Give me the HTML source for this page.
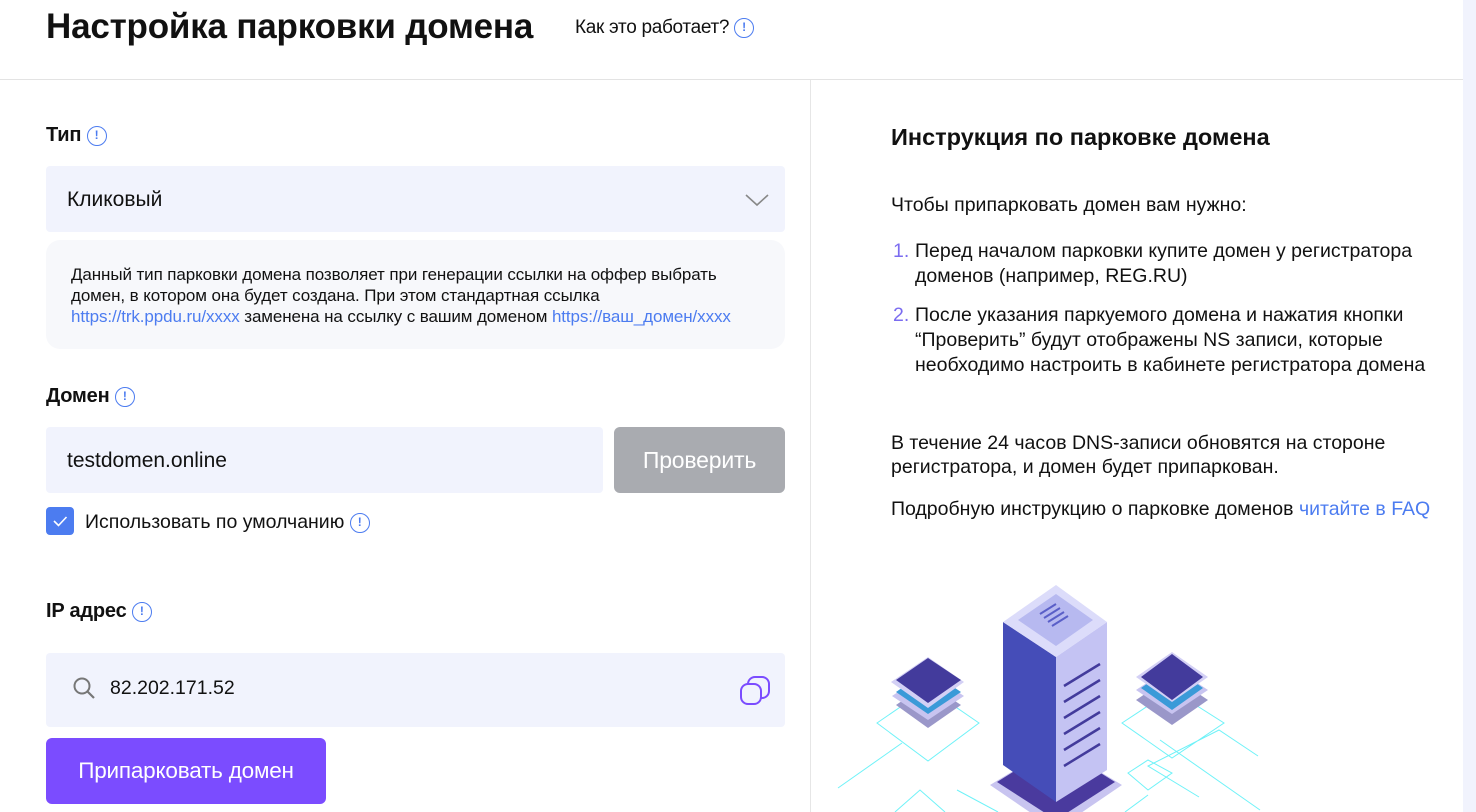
<!DOCTYPE html>
<html><head><meta charset="utf-8"><style>
*{margin:0;padding:0;box-sizing:border-box}
body{width:1476px;height:812px;overflow:hidden;background:#fff;font-family:"Liberation Sans",sans-serif;color:#111;position:relative}
.a{position:absolute;white-space:nowrap}
.i{display:inline-block;width:20px;height:20px;border:1.6px solid #4c7cf0;border-radius:50%;color:#4c7cf0;font-size:12px;font-weight:bold;text-align:center;line-height:17px;vertical-align:middle;letter-spacing:0}
.lbl{font-size:20px;font-weight:bold;letter-spacing:-0.2px}
.box{position:absolute;background:#f1f3fd;border-radius:4px}
.t17{font-size:19.5px}
.lk{color:#4c7cf0}
</style></head><body>
<div class="a" style="left:46px;top:7px;font-size:35px;font-weight:bold;letter-spacing:-0.2px">Настройка парковки домена</div>
<div class="a" style="left:575px;top:17px;font-size:19px;letter-spacing:-0.3px">Как это работает? <span class="i">!</span></div>
<div style="position:absolute;left:0;top:79px;width:1463px;height:1px;background:#e3e3e3"></div>
<div style="position:absolute;left:810px;top:80px;width:1px;height:732px;background:#e6e6e6"></div>
<div style="position:absolute;left:1463px;top:0;width:13px;height:812px;background:#f1f3fd"></div>

<div class="a lbl" style="left:46px;top:124px">Тип <span class="i">!</span></div>
<div class="box" style="left:46px;top:166px;width:739px;height:66px"></div>
<div class="a" style="left:67px;top:188px;font-size:21px">Кликовый</div>
<svg class="a" style="left:744px;top:192px" width="26" height="16"><path d="M2 3 L13 13 L24 3" fill="none" stroke="#888" stroke-width="1.6"/></svg>
<div style="position:absolute;left:46px;top:240px;width:739px;height:109px;background:#f7f8fb;border-radius:14px"></div>
<div class="a" style="left:71px;top:264px;font-size:17px;line-height:21px;letter-spacing:-0.1px">Данный тип парковки домена позволяет при генерации ссылки на оффер выбрать<br>домен, в котором она будет создана. При этом стандартная ссылка<br><span class="lk">https://trk.ppdu.ru/xxxx</span> заменена на ссылку с вашим доменом <span class="lk">https://ваш_домен/xxxx</span></div>

<div class="a lbl" style="left:46px;top:385px">Домен <span class="i">!</span></div>
<div class="box" style="left:46px;top:427px;width:557px;height:66px"></div>
<div class="a" style="left:67px;top:449px;font-size:21px">testdomen.online</div>
<div style="position:absolute;left:614px;top:427px;width:171px;height:66px;background:#a9abb0;border-radius:6px;color:#fff;font-size:23px;text-align:center;line-height:66px;letter-spacing:-0.2px">Проверить</div>
<div style="position:absolute;left:46px;top:507px;width:28px;height:28px;background:#4c7cf0;border-radius:4px"></div>
<svg class="a" style="left:46px;top:507px" width="28" height="28"><path d="M8 14 L12.5 18.5 L20.5 10" fill="none" stroke="#fff" stroke-width="1.6"/></svg>
<div class="a" style="left:85px;top:511px;font-size:19.5px">Использовать по умолчанию <span class="i">!</span></div>

<div class="a lbl" style="left:46px;top:600px">IP адрес <span class="i">!</span></div>
<div class="box" style="left:46px;top:653px;width:739px;height:74px"></div>
<svg class="a" style="left:72px;top:676px" width="26" height="26"><circle cx="10" cy="10" r="7.5" fill="none" stroke="#777" stroke-width="2"/><path d="M15.5 15.5 L22 22" stroke="#777" stroke-width="2.2"/></svg>
<div class="a" style="left:110px;top:677px;font-size:19.5px">82.202.171.52</div>
<svg class="a" style="left:738px;top:674px" width="34" height="34"><rect x="10" y="3" width="21" height="21" rx="7" fill="#f1f3fd" stroke="#7b4cff" stroke-width="2"/><rect x="3" y="10" width="20" height="20" rx="7" fill="#f1f3fd" stroke="#7b4cff" stroke-width="2"/></svg>
<div style="position:absolute;left:46px;top:738px;width:280px;height:66px;background:#7b4cff;border-radius:6px;color:#fff;font-size:22.5px;text-align:center;line-height:66px;letter-spacing:-0.2px">Припарковать домен</div>

<div class="a" style="left:891px;top:124px;font-size:23.5px;font-weight:bold;letter-spacing:0">Инструкция по парковке домена</div>
<div class="a t17" style="left:891px;top:194px">Чтобы припарковать домен вам нужно:</div>
<div class="a t17" style="left:893px;top:239px;line-height:25px"><span style="color:#7b6cf0">1.</span></div>
<div class="a t17" style="left:915px;top:239px;line-height:25px">Перед началом парковки купите домен у регистратора<br>доменов (например, REG.RU)</div>
<div class="a t17" style="left:893px;top:303px;line-height:25px"><span style="color:#7b6cf0">2.</span></div>
<div class="a t17" style="left:915px;top:303px;line-height:25px">После указания паркуемого домена и нажатия кнопки<br>“Проверить” будут отображены NS записи, которые<br>необходимо настроить в кабинете регистратора домена</div>
<div class="a t17" style="left:891px;top:431px;line-height:24px">В течение 24 часов DNS-записи обновятся на стороне<br>регистратора, и домен будет припаркован.</div>
<div class="a t17" style="left:891px;top:498px">Подробную инструкцию о парковке доменов <span class="lk">читайте в FAQ</span></div>

<svg class="a" style="left:830px;top:570px" width="633" height="242" viewBox="830 570 633 242">
<g fill="none" stroke="#6ff2f8" stroke-width="1">
<path d="M838 788 L902 743 M877 723 L928 688 L979 723 L928 761 Z M957 790 L998 812 M1199 797 L1148 766 L1219 730 L1258 756 M1122 723 L1172 690 L1224 723 L1172 758 Z M1160 740 L1260 810"/>
<path d="M895 812 L920 790 L945 812 M1125 812 L1148 795 M1128 773 L1148 760 L1172 773 L1148 790 Z"/>
</g>
<path d="M896 705 L928 683 L961 705 L928 728 Z" fill="#9a97c9"/>
<path d="M892 696 L928 672 L964 696 L928 720 Z" fill="#c8c4f0"/>
<path d="M896 692 L928 670 L961 692 L928 714 Z" fill="#3a9ad8"/>
<path d="M891 682 L928 657 L964 682 L928 708 Z" fill="#d3d0f5"/>
<path d="M896 680 L928 658 L961 680 L928 703 Z" fill="#433b9c"/>
<path d="M1136 700 L1172 676 L1208 700 L1172 725 Z" fill="#9a97c9"/>
<path d="M1136 690 L1172 666 L1208 690 L1172 714 Z" fill="#c8c4f0"/>
<path d="M1141 688 L1172 666 L1203 688 L1172 710 Z" fill="#3a9ad8"/>
<path d="M1136 677 L1172 652 L1208 677 L1172 702 Z" fill="#d3d0f5"/>
<path d="M1141 677 L1172 654 L1203 677 L1172 700 Z" fill="#433b9c"/>
<path d="M990 785 L1056 745 L1122 785 L1056 830 Z" fill="#c8c4f0"/>
<path d="M997 782 L1056 745 L1115 782 L1056 820 Z" fill="#4a3a9e"/>
<path d="M1003 622 L1056 657 L1056 802 L1003 765 Z" fill="#454db8"/>
<path d="M1056 657 L1107 622 L1107 770 L1056 802 Z" fill="#c4c3f3"/>
<path d="M1003 622 L1056 585 L1107 622 L1056 657 Z" fill="#dcdcfa"/>
<path d="M1018 620 L1056 594 L1093 620 L1056 646 Z" fill="#b7b9f0"/>
<g stroke="#433b9c" stroke-width="2.5"><path d="M1064 686 L1100 664 M1064 702 L1100 680 M1064 718 L1100 696 M1064 734 L1100 712 M1064 750 L1100 728 M1064 766 L1100 744"/></g>
<g stroke="#5a5fc8" stroke-width="2"><path d="M1040 614 L1056 604 M1044 618 L1060 608 M1048 622 L1064 612 M1052 626 L1068 616"/></g>
</svg>
</body></html>
